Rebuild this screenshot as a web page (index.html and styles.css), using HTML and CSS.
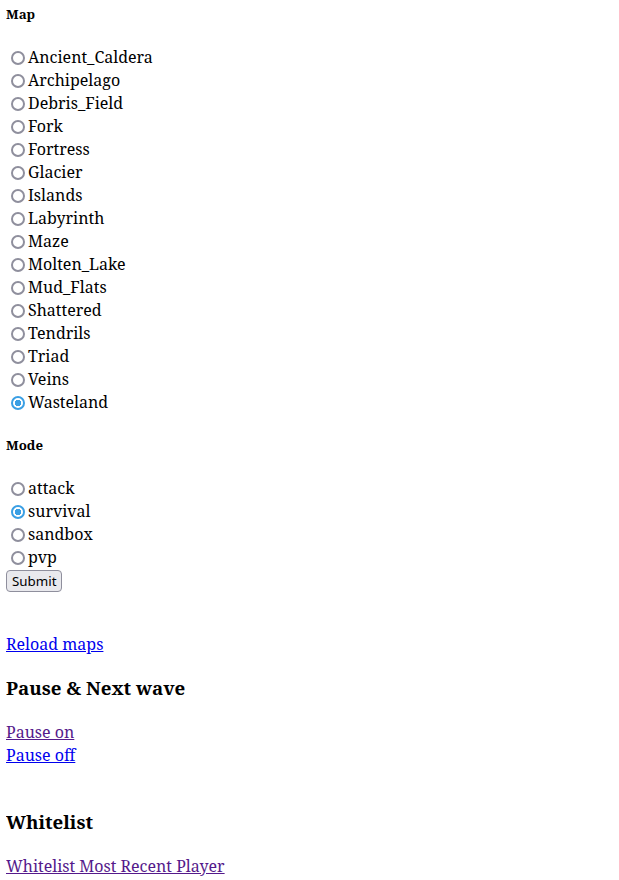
FILE: index.html
```html
<!DOCTYPE html>
<html>
<head>
<title>Admin</title>
<link rel="stylesheet" href="styles.css">
</head>
<body class="page">
<h5 class="label label-first">Map</h5>
<form class="opts">
<input class="radio" type="radio" name="map" value="Ancient_Caldera">Ancient_Caldera<br>
<input class="radio" type="radio" name="map" value="Archipelago">Archipelago<br>
<input class="radio" type="radio" name="map" value="Debris_Field">Debris_Field<br>
<input class="radio" type="radio" name="map" value="Fork">Fork<br>
<input class="radio" type="radio" name="map" value="Fortress">Fortress<br>
<input class="radio" type="radio" name="map" value="Glacier">Glacier<br>
<input class="radio" type="radio" name="map" value="Islands">Islands<br>
<input class="radio" type="radio" name="map" value="Labyrinth">Labyrinth<br>
<input class="radio" type="radio" name="map" value="Maze">Maze<br>
<input class="radio" type="radio" name="map" value="Molten_Lake">Molten_Lake<br>
<input class="radio" type="radio" name="map" value="Mud_Flats">Mud_Flats<br>
<input class="radio" type="radio" name="map" value="Shattered">Shattered<br>
<input class="radio" type="radio" name="map" value="Tendrils">Tendrils<br>
<input class="radio" type="radio" name="map" value="Triad">Triad<br>
<input class="radio" type="radio" name="map" value="Veins">Veins<br>
<input class="radio" type="radio" name="map" value="Wasteland" checked>Wasteland<br>
<h5 class="label">Mode</h5>
<input class="radio" type="radio" name="mode" value="attack">attack<br>
<input class="radio" type="radio" name="mode" value="survival" checked>survival<br>
<input class="radio" type="radio" name="mode" value="sandbox">sandbox<br>
<input class="radio" type="radio" name="mode" value="pvp">pvp<br>
<input class="btn" type="submit" value="Submit">
</form>
<br>
<a class="link" href="#reload">Reload maps</a>
<h3 class="section">Pause &amp; Next wave</h3>
<a class="link visited" href="#on">Pause on</a><br>
<a class="link" href="#off">Pause off</a><br>
<br>
<h3 class="section">Whitelist</h3>
<a class="link visited" href="#wl">Whitelist Most Recent Player</a>
</body>
</html>
```

FILE: styles.css
```css
.page {
  margin: 6px 6px;
  font-family: "Noto Serif", "DejaVu Serif", serif;
  font-size: 16px;
  line-height: 23px;
  color: #000;
  background: #fff;
}
.label {
  font-size: 13.28px;
  line-height: 17px;
  font-weight: bold;
  margin: 23px 0 23px;
}
.label-first {
  margin-top: 0;
}
.opts {
  margin: 0 0 18px;
}
.radio {
  appearance: none;
  -webkit-appearance: none;
  box-sizing: border-box;
  width: 14px;
  height: 14px;
  margin: 0 3px 0 5px;
  border: 2px solid #8f8f9d;
  border-radius: 50%;
  background: #fff;
  vertical-align: -2px;
}
.radio:checked {
  border: 2px solid #3a9fe4;
  background: radial-gradient(circle, #3a9fe4 0 3px, #fff 3.5px);
}
.btn {
  box-sizing: border-box;
  height: 22px;
  font-family: "Noto Sans", "DejaVu Sans", sans-serif;
  font-size: 13.33px;
  line-height: 18px;
  color: #000;
  background: #e9e9ed;
  border: 1px solid #8f8f9d;
  border-radius: 4px;
  padding: 1px 5px;
  margin: 1px 0 0;
  vertical-align: top;
}
.link {
  color: #0000ee;
}
.visited {
  color: #551a8b;
}
.section {
  font-size: 18.72px;
  line-height: 26px;
  font-weight: bold;
  margin: 19px 0 20px;
}
```
